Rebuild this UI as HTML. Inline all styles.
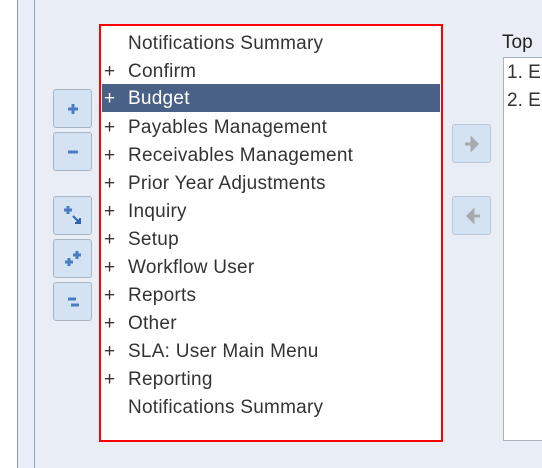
<!DOCTYPE html>
<html><head><style>
body{margin:0;width:542px;height:468px;overflow:hidden;background:#e9eef6;font-family:"Liberation Sans",sans-serif;position:relative}
.a{position:absolute;white-space:nowrap}
.btn{position:absolute;left:53px;width:39px;height:39px;background:#d3e3f3;border:1px solid #a9b4c0;border-radius:3px;box-sizing:border-box}
.row{position:absolute;left:102px;width:338px;height:28px;font-size:19px;line-height:30px;color:#333;letter-spacing:0.25px;white-space:nowrap}
.row .p{position:absolute;left:2px}
.row .t{position:absolute;left:26px}
</style></head><body>
<div class="a" style="left:0;top:0;width:17px;height:468px;background:#fff"></div>
<div class="a" style="left:17px;top:0;width:1px;height:468px;background:#8a9ab0"></div>
<div class="a" style="left:18px;top:0;width:16px;height:468px;background:#e9eef6"></div>
<div class="a" style="left:34px;top:0;width:1px;height:468px;background:#8fa8c4"></div>

<div class="a" style="left:99px;top:24px;width:344px;height:418px;border:2px solid #f00;box-sizing:border-box;background:#fff"></div>
<div class="row" style="top:29px"><span class="t">Notifications Summary</span></div>
<div class="row" style="top:57px"><span class="p">+</span><span class="t">Confirm</span></div>
<div class="row" style="top:84px;background:#4a6187;color:#fff"><span class="p">+</span><span class="t">Budget</span></div>
<div class="row" style="top:113px"><span class="p">+</span><span class="t">Payables Management</span></div>
<div class="row" style="top:141px"><span class="p">+</span><span class="t">Receivables Management</span></div>
<div class="row" style="top:169px"><span class="p">+</span><span class="t">Prior Year Adjustments</span></div>
<div class="row" style="top:197px"><span class="p">+</span><span class="t">Inquiry</span></div>
<div class="row" style="top:225px"><span class="p">+</span><span class="t">Setup</span></div>
<div class="row" style="top:253px"><span class="p">+</span><span class="t">Workflow User</span></div>
<div class="row" style="top:281px"><span class="p">+</span><span class="t">Reports</span></div>
<div class="row" style="top:309px"><span class="p">+</span><span class="t">Other</span></div>
<div class="row" style="top:337px"><span class="p">+</span><span class="t">SLA: User Main Menu</span></div>
<div class="row" style="top:365px"><span class="p">+</span><span class="t">Reporting</span></div>
<div class="row" style="top:393px"><span class="t">Notifications Summary</span></div>

<div class="btn" style="top:89px"><svg width="39" height="39"><path d="M14 19h10M19 14v10" stroke="#4a7cc0" stroke-width="3"/></svg></div>
<div class="btn" style="top:132px"><svg width="39" height="39"><path d="M14 19h10" stroke="#4a7cc0" stroke-width="3"/></svg></div>
<div class="btn" style="top:196px"><svg width="39" height="39"><path d="M10 13h8M14 9v8" stroke="#4a7cc0" stroke-width="3"/><path d="M19 19l6 6M21 26h5v-5" stroke="#2f66b0" stroke-width="2" fill="#2f66b0"/></svg></div>
<div class="btn" style="top:239px"><svg width="39" height="39"><path d="M11 22h8M15 18v8M19 15h8M23 11v8" stroke="#4a7cc0" stroke-width="3"/></svg></div>
<div class="btn" style="top:282px"><svg width="39" height="39"><path d="M14 16h8M17 22h8" stroke="#4a7cc0" stroke-width="3"/></svg></div>

<div class="btn" style="left:452px;top:124px;border-color:#bcc6d2"><svg width="39" height="39"><path d="M12 19h9M19 14l5 5-5 5z" stroke="#aaa" stroke-width="3" fill="#aaa"/></svg></div>
<div class="btn" style="left:452px;top:196px;border-color:#bcc6d2"><svg width="39" height="39"><path d="M27 19h-9M20 14l-5 5 5 5z" stroke="#aaa" stroke-width="3" fill="#aaa"/></svg></div>

<div class="a" style="left:502px;top:32px;font-size:19px;color:#222">Top</div>
<div class="a" style="left:503px;top:57px;width:50px;height:384px;background:#fff;border:1px solid #a9b4c0;box-sizing:border-box"></div>
<div class="a" style="left:507px;top:59px;font-size:19px;line-height:28px;color:#333">1. E<br>2. E</div>
</body></html>
